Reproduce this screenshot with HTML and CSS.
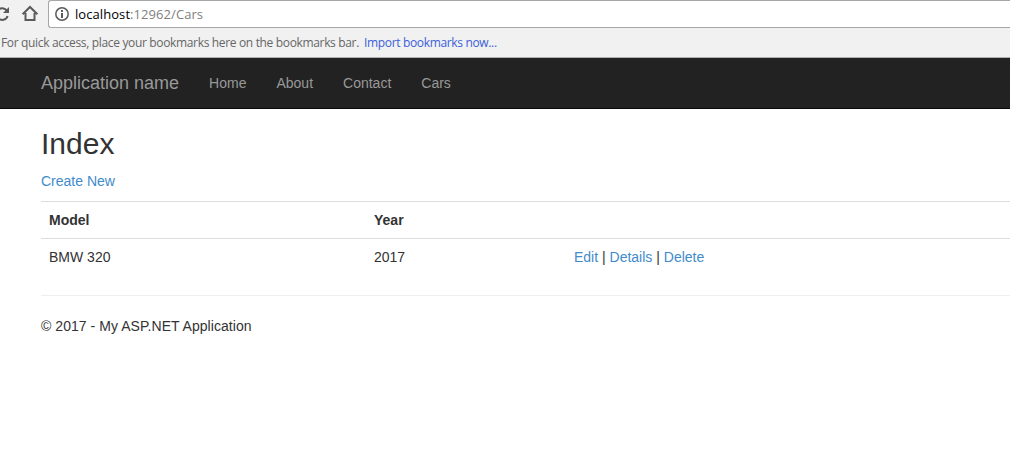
FILE: index.html
```html
<!DOCTYPE html>
<html lang="en">
<head>
<meta charset="utf-8">
<title>Index - My ASP.NET Application</title>
<link rel="stylesheet" href="styles.css">
</head>
<body>
<div class="browser">
  <div class="toolbar">
    <svg class="reload" width="10" height="28" viewBox="0 0 10 28" fill="none" stroke="#5a5a5a" stroke-width="2">
      <path d="M-2 10.200A5.500 5.500 0 0 1 7 11M7.600 16A5.500 5.500 0 0 1 -2 17.800"/>
      <path d="M9 7v6H3z" fill="#5a5a5a" stroke="none"/>
    </svg>
    <svg class="home" width="18" height="28" viewBox="0 0 18 28" fill="none" stroke="#5a5a5a" stroke-width="2">
      <path d="M1.600 14.200L9 7l7.400 7.200M4.500 13v7h9v-7"/>
    </svg>
    <div class="address">
      <svg class="info" width="14" height="14" viewBox="0 0 14 14" fill="none" stroke="#5a5a5a">
        <circle cx="7" cy="7" r="6.200" stroke-width="1.500"/>
        <path d="M7 3v2M7 6v5" stroke-width="2"/>
      </svg>
      <span class="url"><span class="host">localhost</span>:12962/Cars</span>
    </div>
  </div>
  <div class="bookmarks"><span class="hint">For quick access, place your bookmarks here on the bookmarks bar.</span><a class="import">Import bookmarks now...</a></div>
</div>
<nav class="navbar">
  <a class="brand">Application name</a>
  <a class="nav-link">Home</a>
  <a class="nav-link">About</a>
  <a class="nav-link">Contact</a>
  <a class="nav-link">Cars</a>
</nav>
<main class="content">
  <h2 class="title">Index</h2>
  <p class="create"><a class="link">Create New</a></p>
  <table class="table">
    <tr><th class="col-model">Model</th><th class="col-year">Year</th><th></th></tr>
    <tr><td>BMW 320</td><td>2017</td><td><a class="link">Edit</a> | <a class="link">Details</a> | <a class="link">Delete</a></td></tr>
  </table>
  <hr class="rule">
  <footer class="footer">© 2017 - My ASP.NET Application</footer>
</main>
</body>
</html>
```
FILE: styles.css
```css
* { box-sizing: border-box; }
body {
  margin: 0;
  background: #fff;
  color: #333;
  font: 14px/20px "Liberation Sans", Arial, sans-serif;
}
.browser {
  height: 58px;
  background: #f1f1f1;
  border-bottom: 1px solid #b0b0b0;
  font-family: "Open Sans", "Noto Sans", sans-serif;
}
.toolbar { display: flex; height: 28px; }
.home { margin-left: 11px; }
.address {
  display: flex;
  align-items: center;
  flex: 1;
  height: 28px;
  margin-left: 9px;
  padding-left: 6px;
  background: #fff;
  border: 1px solid #a6a6a6;
  border-right: 0;
  border-radius: 3px 0 0 3px;
}
.url { margin-left: 6px; color: #808080; font-size: 13px; letter-spacing: 0.07px; white-space: nowrap; }
.host { color: #000; }
.bookmarks {
  display: flex;
  height: 29px;
  padding-left: 1px;
  font-size: 12px;
  line-height: 30px;
  letter-spacing: -0.34px;
  white-space: nowrap;
  color: #666;
}
.hint { width: 363px; }
.import { color: #3b5fd9; }
.navbar {
  display: flex;
  height: 51px;
  padding-left: 26px;
  background: #222;
  border-bottom: 1px solid #080808;
  color: #999;
}
.brand { padding: 15px; font-size: 18px; }
.nav-link { padding: 15px; }
.content { padding: 18px 0 0 41px; }
.title { margin: 0 0 11px; font-size: 30px; font-weight: 500; line-height: 33px; }
.create { margin: 0 0 10px; }
.link { color: #428bca; }
.table { width: 100%; table-layout: fixed; border-collapse: collapse; margin-bottom: 20px; }
.table th, .table td { padding: 8px; border-top: 1px solid #ddd; text-align: left; }
.col-model { width: 325px; }
.col-year { width: 200px; }
.rule { margin: 0 0 20px; border: 0; border-top: 1px solid #eee; }
.footer { letter-spacing: 0.05px; }
```
